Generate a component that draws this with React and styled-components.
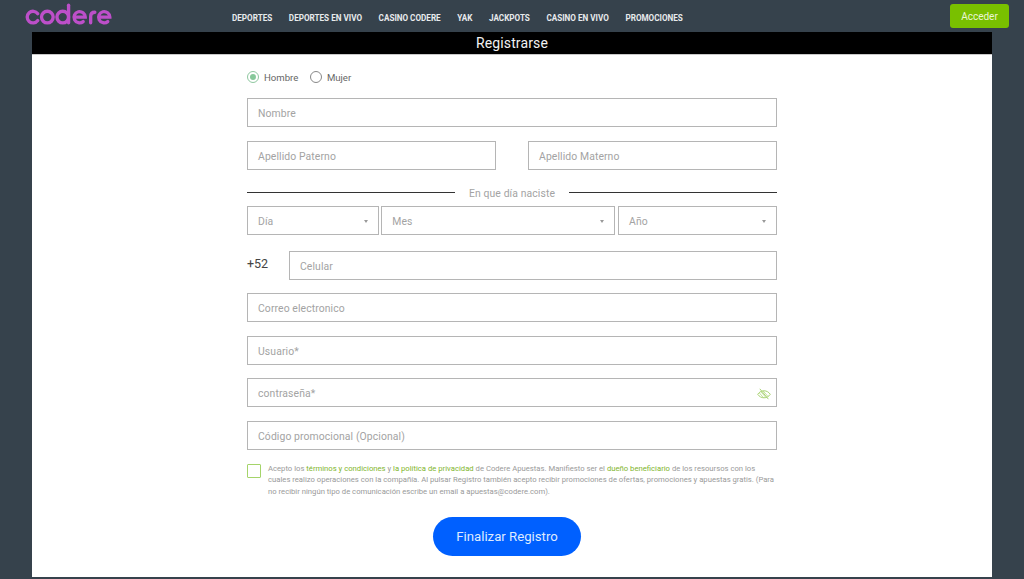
import React from "react";
import styled, { createGlobalStyle } from "styled-components";

const Global = createGlobalStyle`
  html, body { margin: 0; padding: 0; background: #36424c; height: 100%; overflow: hidden; }
  body { font-family: Roboto, "Liberation Sans", sans-serif; }
  * { box-sizing: border-box; }
`;
const Page = styled.div`width: 1024px; height: 579px; background: #36424c; display: flex; flex-direction: column;`;
const Header = styled.header`height: 32px; display: flex; align-items: flex-start; flex: none;`;
const LogoWrap = styled.div`width: 232px; height: 32px; padding: 2px 0 0 25px; flex: none;`;
const Nav = styled.nav`display: flex; gap: 16.6px; height: 32px; align-items: center; padding-top: 4px; flex: 1;`;
const NavItem = styled.a`color: #e8eaec; font-size: 8.15px; font-weight: 700; white-space: nowrap;`;
const Login = styled.button`
  width: 59px; height: 24px; margin: 4px 15px 0 0; border: 0; border-radius: 3px; background: #79c000;
  color: #eaf6d4; font: 400 10px Roboto, sans-serif; padding: 0; position: relative; z-index: 1;
`;
const Panel = styled.main`width: 960px; height: 545px; margin-left: 32px; background: #fff; display: flex; flex-direction: column; flex: none;`;
const TitleBar = styled.div`
  height: 22px; background: #000; color: #f2f2f2; text-align: center; font-size: 14px; font-weight: 400; line-height: 22px;
  box-shadow: 0 1px 0 #c9c9c9; flex: none; letter-spacing: 0.12px;
`;
const Form = styled.form`width: 530px; margin-left: 215px; display: flex; flex-direction: column; padding-top: 16px;`;
const RadioRow = styled.div`display: flex; align-items: center; height: 14px; margin-bottom: 14px;`;
const Radio = styled.span`
  width: 12px; height: 12px; border-radius: 50%; flex: none; margin-right: 5px; display: flex; align-items: center; justify-content: center;
  border: 1px solid ${p => (p.$on ? "#8fc8a0" : "#888")};
  &::after { content: ""; width: 6px; height: 6px; border-radius: 50%; background: ${p => (p.$on ? "#86c89a" : "transparent")}; }
`;
const RadioLabel = styled.span`font-size: 9.6px; color: #666; margin-right: 11.5px;`;
const Field = styled.div`
  height: 29px; border: 1px solid #b5b5b5; display: flex; align-items: center; justify-content: space-between;
  padding: 2px 10px 0; font-size: 10.4px; color: #a3a3a3; letter-spacing: 0.1px; flex: ${p => p.$grow || "none"}; min-width: 0; background: #fff;
  width: ${p => p.$w || "auto"};
`;
const Row = styled.div`display: flex; margin-bottom: ${p => p.$mb ?? 14}px; justify-content: space-between; align-items: center;`;
const DateTitle = styled.div`display: flex; align-items: center; height: 14px; margin: 1px 0 7px; font-size: 10.4px; color: #a3a3a3;`;
const Rule = styled.span`height: 1px; background: #333; flex: 1;`;
const DateText = styled.span`padding: 2px 14px 0; letter-spacing: 0.1px;`;
const Caret = styled.i`width: 0; height: 0; border-left: 2.5px solid transparent; border-right: 2.5px solid transparent; border-top: 3px solid #999;`;
const Prefix = styled.span`width: 42px; font-size: 12.5px; color: #444; flex: none; margin-top: -4px;`;
const Terms = styled.div`display: flex; margin-top: 1px;`;
const Check = styled.span`width: 14px; height: 14px; border: 1px solid #a5d46a; border-radius: 1px; flex: none; margin: 0 7px 0 0;`;
const TermsText = styled.p`margin: -1px 0 0; width: 510px; font-size: 7.7px; line-height: 11.3px; color: #9a9a9a;`;
const Green = styled.span`color: #7fb52c;`;
const Submit = styled.button`
  align-self: center; width: 148px; height: 39px; margin: 20px 10px 0 0; border: 0; border-radius: 20px;
  background: #0060ff; color: #dfeaff; font: 400 13.2px Roboto, sans-serif;
`;

const Logo = () => (
  <svg width="88" height="25" viewBox="0 0 84 24" fill="none" stroke="#bd4fc9" strokeWidth="3.2" strokeLinecap="round" role="img" aria-label="codere">
    <path d="M12 11.2a5.6 5.6 0 1 0 0 6.6" />
    <circle cx="21.2" cy="14.5" r="5.6" />
    <circle cx="36" cy="14.5" r="5.6" />
    <path d="M41.6 3v17" />
    <path d="M47 14.5h10.6a5.4 5.4 0 1 0-2 4.3" />
    <path d="M62.8 20v-6.2c0-2.6 1.6-4 4-4" />
    <path d="M70.6 14.5h10.6a5.4 5.4 0 1 0-2 4.3" />
  </svg>
);

const EyeOff = () => (
  <svg width="14" height="12" viewBox="0 0 14 12" fill="none" stroke="#a9d373" strokeWidth="1" style={{ marginRight: -5 }}>
    <path d="M.7 6.3C2.4 3.9 4.5 2.8 7 2.8s4.6 1.1 6.3 3.5C11.6 8.7 9.5 9.8 7 9.8S2.4 8.7.7 6.3Z" />
    <path d="M2.8 .8 11.4 11.2" />
    <path d="M3.8 3.6 9 9.6M6 2.9l5 5.6M2.4 5l4 4.6" strokeWidth=".7" />
  </svg>
);

const nav = ["DEPORTES", "DEPORTES EN VIVO", "CASINO CODERE", "YAK", "JACKPOTS", "CASINO EN VIVO", "PROMOCIONES"];

export default function App() {
  return (
    <Page>
      <Global />
      <Header>
        <LogoWrap><Logo /></LogoWrap>
        <Nav>{nav.map(n => <NavItem key={n}>{n}</NavItem>)}</Nav>
        <Login type="button">Acceder</Login>
      </Header>
      <Panel>
        <TitleBar>Registrarse</TitleBar>
        <Form>
          <RadioRow>
            <Radio $on />
            <RadioLabel>Hombre</RadioLabel>
            <Radio />
            <RadioLabel>Mujer</RadioLabel>
          </RadioRow>
          <Row><Field $grow="1">Nombre</Field></Row>
          <Row>
            <Field $w="249px">Apellido Paterno</Field>
            <Field $w="249px">Apellido Materno</Field>
          </Row>
          <DateTitle><Rule /><DateText>En que día naciste</DateText><Rule /></DateTitle>
          <Row $mb={16}>
            <Field $w="131.5px">Día<Caret /></Field>
            <Field $w="234px">Mes<Caret /></Field>
            <Field $w="159px">Año<Caret /></Field>
          </Row>
          <Row $mb={13.4}>
            <Prefix>+52</Prefix>
            <Field $grow="1">Celular</Field>
          </Row>
          <Row $mb={13.4}><Field $grow="1">Correo electronico</Field></Row>
          <Row $mb={13.4}><Field $grow="1">Usuario*</Field></Row>
          <Row $mb={13.4}><Field $grow="1">contraseña*<EyeOff /></Field></Row>
          <Row $mb={13.4}><Field $grow="1">Código promocional (Opcional)</Field></Row>
          <Terms>
            <Check />
            <TermsText>
              Acepto los <Green>términos y condiciones</Green> y <Green>la política de privacidad</Green> de Codere Apuestas. Manifiesto ser el <Green>dueño beneficiario</Green> de los resoursos con los cuales realizo operaciones con la compañía. Al pulsar Registro también acepto recibir promociones de ofertas, promociones y apuestas gratis. (Para no recibir ningún tipo de comunicación escribe un email a apuestas@codere.com).
            </TermsText>
          </Terms>
          <Submit type="button">Finalizar Registro</Submit>
        </Form>
      </Panel>
    </Page>
  );
}
